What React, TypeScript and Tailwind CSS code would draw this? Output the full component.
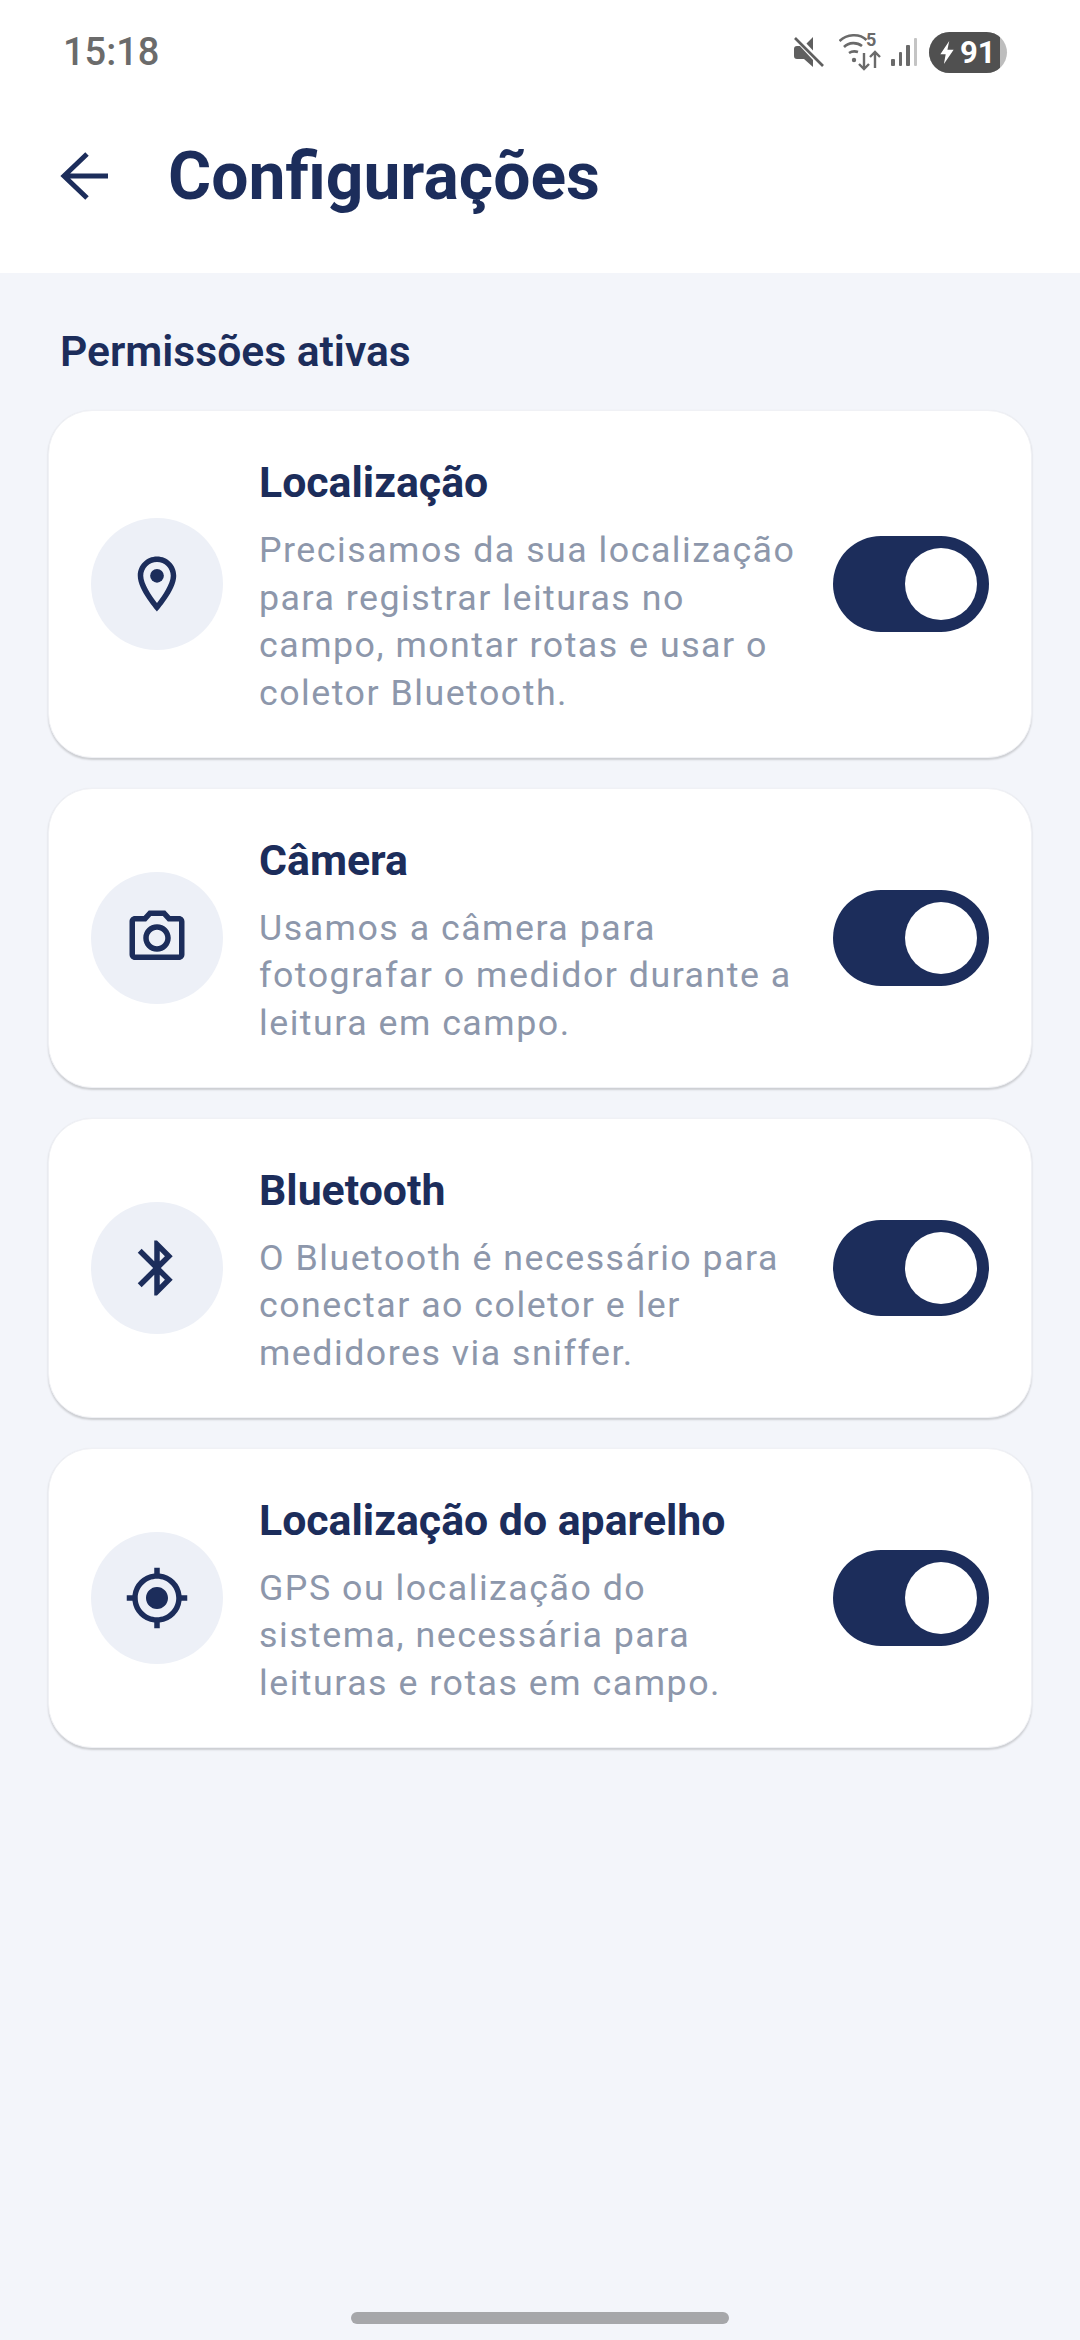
import { MdBluetooth, MdGpsFixed, MdOutlineLocationOn, MdOutlinePhotoCamera } from "react-icons/md";
import type { ReactNode } from "react";

const permissions: { title: string; text: string; icon: ReactNode }[] = [
  {
    title: "Localização",
    text: "Precisamos da sua localização para registrar leituras no campo, montar rotas e usar o coletor Bluetooth.",
    icon: <MdOutlineLocationOn size={66} />,
  },
  {
    title: "Câmera",
    text: "Usamos a câmera para fotografar o medidor durante a leitura em campo.",
    icon: <MdOutlinePhotoCamera size={66} />,
  },
  {
    title: "Bluetooth",
    text: "O Bluetooth é necessário para conectar ao coletor e ler medidores via sniffer.",
    icon: <MdBluetooth size={66} />,
  },
  {
    title: "Localização do aparelho",
    text: "GPS ou localização do sistema, necessária para leituras e rotas em campo.",
    icon: <MdGpsFixed size={66} />,
  },
];

function StatusIcons() {
  return (
    <div className="flex items-center">
      {/* mute */}
      <svg width="30" height="30" viewBox="0 0 30 30" fill="none" className="mr-[15px]">
        <path d="M3 9h7l9-9v30l-9-8H3c-2 0-3-1-3-3v-7c0-2 1-3 3-3z" fill="#5f5f5f" />
        <path d="M0 -2l30 32" stroke="#ffffff" strokeWidth="6.5" />
        <path d="M1 1l28 28" stroke="#5f5f5f" strokeWidth="2.6" />
      </svg>
      {/* wifi with 5 and arrows */}
      <div className="relative w-[42px] h-[38px] mr-[10px]">
        <svg width="42" height="38" viewBox="0 0 42 38" fill="none" className="absolute inset-0">
          <path d="M0.5 8c7-7 20-8 27-1" stroke="#6a6a6a" strokeWidth="2.6" />
          <path d="M5 14c5-5 13-5 18-1" stroke="#6a6a6a" strokeWidth="2.6" />
          <path d="M10 20c3-2 6-2 9-1" stroke="#6a6a6a" strokeWidth="2.6" />
          <circle cx="15" cy="27" r="2.2" fill="#6a6a6a" />
          <path d="M25 20v16M20 31l5 5 5-5" stroke="#6a6a6a" strokeWidth="2.4" />
          <path d="M36 35V19M31 24l5-5 5 5" stroke="#6a6a6a" strokeWidth="2.4" />
        </svg>
        <span className="absolute left-[27px] top-[-3px] text-[18px] leading-[20px] font-bold text-[#6a6a6a]">5</span>
      </div>
      {/* signal */}
      <div className="flex items-end gap-[4px] h-[28px] mr-[12px]">
        <span className="w-[3.5px] h-[7px] rounded-[1px] bg-[#6a6a6a]" />
        <span className="w-[3.5px] h-[14px] rounded-[1px] bg-[#6a6a6a]" />
        <span className="w-[3.5px] h-[21px] rounded-[1px] bg-[#6a6a6a]" />
        <span className="w-[3.5px] h-[28px] rounded-[1px] bg-[#c4c4c4]" />
      </div>
      {/* battery */}
      <div className="relative w-[78px] h-[41px] rounded-full overflow-hidden bg-[#bdbdbd]">
        <div className="absolute inset-y-0 left-0 w-[71px] bg-[#505050]" />
        <div className="relative flex items-center h-full pl-[11px]">
          <svg width="14" height="23" viewBox="0 0 15 26">
            <path d="M10 0L0 15h6l-2 11 11-16H8z" fill="#ffffff" />
          </svg>
          <span className="ml-[6px] text-[31px] leading-[41px] font-bold text-white">91</span>
        </div>
      </div>
    </div>
  );
}

function Toggle() {
  return (
    <div className="shrink-0 w-[156px] h-[96px] rounded-full bg-[#1c2d5b] flex items-center justify-end pr-[12px]">
      <div className="w-[72px] h-[72px] rounded-full bg-white" />
    </div>
  );
}

export default function App() {
  return (
    <div className="min-h-[2340px] flex flex-col bg-[#f3f5fa] font-['Roboto',sans-serif]">
      <header className="bg-white h-[273px]">
        <div className="h-[104px] flex items-center justify-between pl-[63px] pr-[73px]">
          <span className="text-[38px] font-medium text-[#6b6b6b]">15:18</span>
          <StatusIcons />
        </div>
        <div className="flex items-center h-[144px] pl-[60px]">
          <svg width="48" height="48" viewBox="0 0 48 48" fill="none" className="shrink-0">
            <path d="M48 24H5M27 2L4 24l23 22" stroke="#1c2d5b" strokeWidth="5" />
          </svg>
          <h1 className="ml-[60px] text-[66px] font-bold text-[#1c2d5b]">Configurações</h1>
        </div>
      </header>

      <main className="flex flex-col px-[48px]">
        <h2 className="mt-[54px] ml-[12px] mb-[35px] h-[48px] text-[42.6px] leading-[48px] font-semibold text-[#1c2d5b]">
          Permissões ativas
        </h2>
        <div className="flex flex-col gap-[30px]">
          {permissions.map((p) => (
            <section
              key={p.title}
              className="flex items-center rounded-[44px] bg-white px-[42px] border border-[#f0f1f5] shadow-[0_1.5px_2px_rgba(0,0,0,0.16)]"
            >
              <div className="shrink-0 w-[132px] h-[132px] rounded-full bg-[#edf0f7] flex items-center justify-center text-[#1c2d5b]">
                {p.icon}
              </div>
              <div className="flex-1 ml-[36px] mr-[32px] pt-[47px] pb-[39px]">
                <h3 className="text-[42.8px] leading-[48px] font-bold text-[#1c2d5b]">{p.title}</h3>
                <p className="mt-[21px] text-[35.75px] leading-[47.67px] tracking-[1.5px] text-[#8d97ab]">{p.text}</p>
              </div>
              <Toggle />
            </section>
          ))}
        </div>
      </main>

      <div className="mt-auto pb-[16px] flex justify-center">
        <div className="w-[378px] h-[12px] rounded-full bg-[#a6a7aa]" />
      </div>
    </div>
  );
}
